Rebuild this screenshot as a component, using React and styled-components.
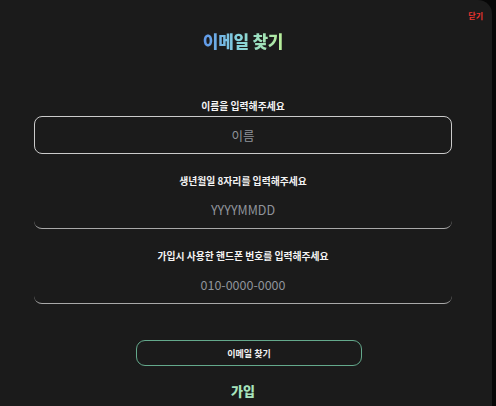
import React from 'react';
import styled, { createGlobalStyle } from 'styled-components';

const GlobalStyle = createGlobalStyle`
  body {
    margin: 0;
    background: #070707;
    font-family: "Noto Sans CJK KR", "Noto Sans", sans-serif;
  }
`;

const Panel = styled.div`
  width: 492px;
  height: 406px;
  box-sizing: border-box;
  padding-top: 10px;
  background: #1b1b1b;
  border-top-right-radius: 14px;
  display: flex;
  flex-direction: column;
  overflow: hidden;
`;

const TopBar = styled.div`
  display: flex;
  justify-content: flex-end;
  height: 12px;
  padding-right: 9px;
`;

const CloseButton = styled.button`
  background: none;
  border: 0;
  padding: 0;
  color: #ea3430;
  font: 700 8px/12px "Noto Sans CJK KR", sans-serif;
  cursor: pointer;
`;

const Content = styled.div`
  display: flex;
  flex-direction: column;
  align-items: center;
  padding-right: 6px;
`;

const Title = styled.h1`
  margin: 7px 0 0;
  font-size: 17px;
  line-height: 23px;
  font-weight: 900;
  letter-spacing: -0.3px;
  background: linear-gradient(90deg, #5f97ea, #86d3dc 45%, #b8ee98);
  -webkit-background-clip: text;
  background-clip: text;
  color: transparent;
`;

const Form = styled.form`
  width: 418px;
  margin-top: 45px;
  display: flex;
  flex-direction: column;
  gap: 18px;
`;

const Field = styled.label`
  display: flex;
  flex-direction: column;
  align-items: center;
`;

const Label = styled.span`
  color: #f4f4f4;
  font-size: 9.8px;
  line-height: 19px;
  font-weight: 700;
`;

const Input = styled.input`
  width: 100%;
  height: 38px;
  box-sizing: border-box;
  background: transparent;
  border: ${({ $active }) => ($active ? '1.5px solid #cbcbcb' : 'none')};
  border-bottom: 1.5px solid ${({ $active }) => ($active ? '#cbcbcb' : '#a9a9a9')};
  border-radius: 8px;
  outline: none;
  color: #eee;
  text-align: center;
  font: 400 12.5px "Noto Sans CJK KR", sans-serif;

  &::placeholder {
    color: #8f939a;
  }
`;

const SubmitButton = styled.button`
  width: 226px;
  height: 26px;
  margin: 36px 0 0 12px;
  box-sizing: border-box;
  background: transparent;
  border: 1.5px solid #64a98c;
  border-radius: 9px;
  color: #f2f2f2;
  font: 700 9px "Noto Sans CJK KR", sans-serif;
  cursor: pointer;
`;

const JoinLink = styled.a`
  margin-top: 16px;
  color: #a6e3bd;
  font-size: 13px;
  line-height: 18px;
  font-weight: 900;
  cursor: pointer;
`;

const fields = [
  { label: '이름을 입력해주세요', placeholder: '이름', active: true },
  { label: '생년월일 8자리를 입력해주세요', placeholder: 'YYYYMMDD' },
  { label: '가입시 사용한 핸드폰 번호를 입력해주세요', placeholder: '010-0000-0000' },
];

export default function App() {
  return (
    <>
      <GlobalStyle />
      <Panel>
        <TopBar>
          <CloseButton type="button">닫기</CloseButton>
        </TopBar>
        <Content>
          <Title>이메일 찾기</Title>
          <Form onSubmit={(e) => e.preventDefault()}>
            {fields.map((f) => (
              <Field key={f.placeholder}>
                <Label>{f.label}</Label>
                <Input $active={f.active} placeholder={f.placeholder} />
              </Field>
            ))}
          </Form>
          <SubmitButton type="button">이메일 찾기</SubmitButton>
          <JoinLink>가입</JoinLink>
        </Content>
      </Panel>
    </>
  );
}
